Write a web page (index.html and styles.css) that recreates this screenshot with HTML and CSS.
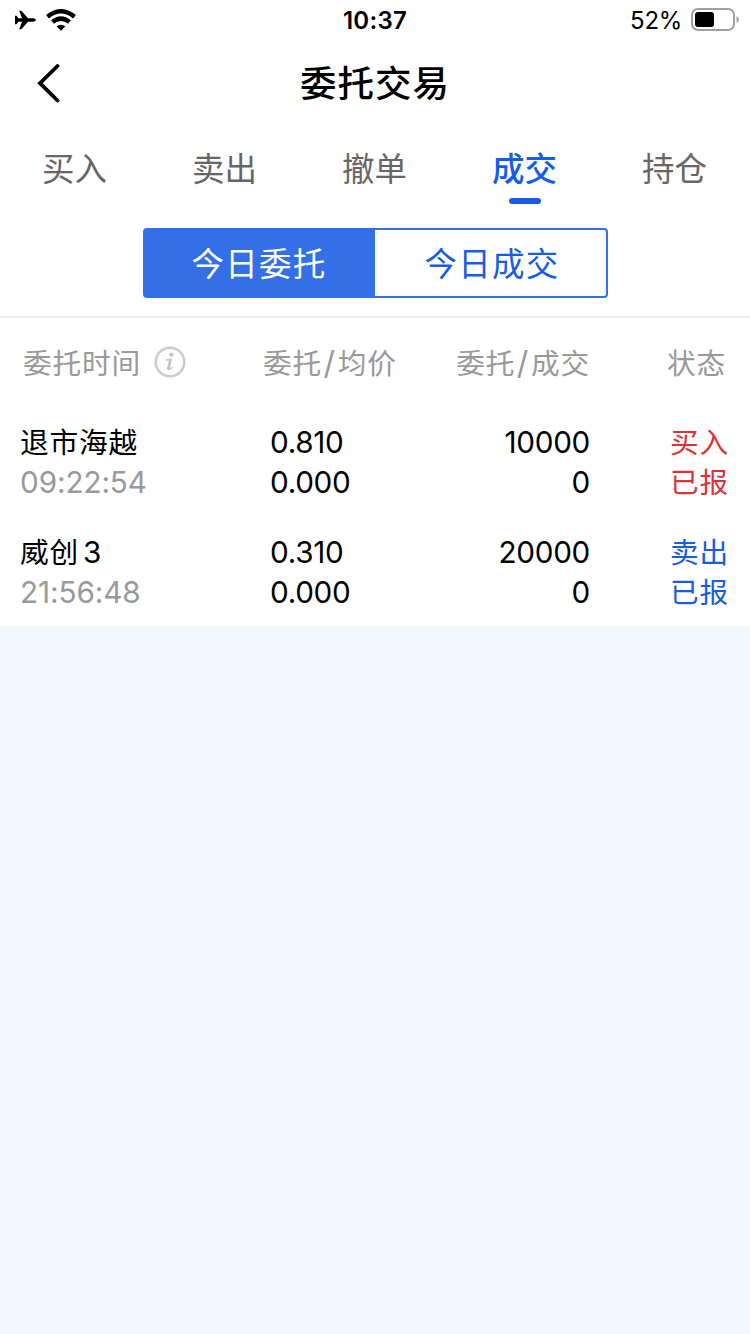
FILE: index.html
```html
<!DOCTYPE html>
<html lang="zh-CN">
<head>
<meta charset="utf-8">
<title>委托交易</title>
<link rel="stylesheet" href="styles.css">
</head>
<body>
<div class="top">
  <div class="status">
    <div class="status-left">
      <svg class="plane" viewBox="0 0 22 20" width="22" height="20"><path d="M21.800 10C21.800 8.900 20.500 8.300 18.500 8.300H14L7.500 .7H5.200L8 8.300H4.300L2.600 5.700H1V14.300H2.600L4.300 11.700H8L5.200 19.300H7.500L14 11.700H18.500C20.500 11.700 21.800 11.100 21.800 10Z"/></svg>
      <svg class="wifi" viewBox="0 0 30 22" width="30" height="22"><path d="M1.500 7.700Q15-3.100 28.500 7.700" fill="none" stroke="#000" stroke-width="4.500"/><path d="M6.500 13Q15 6.200 23.500 13" fill="none" stroke="#000" stroke-width="4.500"/><path d="M10.600 17.300Q15 14 19.400 17.300L15 21.700Z"/></svg>
    </div>
    <div class="clock">10:37</div>
    <div class="status-right">
      <span>52%</span>
      <svg viewBox="0 0 48 24" width="48" height="24"><rect x="1" y="1" width="42" height="21" rx="6" fill="none" stroke="#a0a0a0" stroke-width="2"/><rect x="4" y="4" width="19" height="15" rx="3"/><path d="M45.500 8.200Q48 9 48 11.500T45.500 14.800Z" fill="#a0a0a0"/></svg>
    </div>
  </div>
  <header class="nav">
    <svg class="back" viewBox="0 0 24 40" width="24" height="40"><path d="M21.500 3L4 20.200L21.500 37.500" fill="none" stroke="#000" stroke-width="3.800" stroke-linecap="round" stroke-linejoin="miter"/></svg>
    <h1 class="title">委托交易</h1>
  </header>
  <nav class="tabs">
    <span class="tab">买入</span>
    <span class="tab">卖出</span>
    <span class="tab">撤单</span>
    <span class="tab active">成交</span>
    <span class="tab">持仓</span>
  </nav>
  <div class="segment">
    <span class="option selected">今日委托</span>
    <span class="option">今日成交</span>
  </div>
</div>
<main class="orders">
  <div class="row head">
    <div class="name">委托时间<svg class="info" viewBox="0 0 32 32" width="32" height="32"><circle cx="16" cy="16" r="14.300" fill="none" stroke="#ccc" stroke-width="2.500"/><circle cx="17.300" cy="8.600" r="2.200" fill="#c4c4c4"/><path d="M12 14Q14.500 13.800 16.600 13.300L14.200 22.500Q14.200 25 18.500 21.300" fill="none" stroke="#c4c4c4" stroke-width="1.500"/><path d="M16.600 13.200L14.100 23.800" fill="none" stroke="#c4c4c4" stroke-width="2.800"/></svg></div>
    <div class="price">委托<i class="slash">/</i>均价</div>
    <div class="amount">委托<i class="slash">/</i>成交</div>
    <div class="state">状态</div>
  </div>
  <div class="row">
    <div class="name"><div>退市海越</div><div class="num time">09:22:54</div></div>
    <div class="price num"><div>0.810</div><div>0.000</div></div>
    <div class="amount num"><div>10000</div><div>0</div></div>
    <div class="state buy"><div>买入</div><div>已报</div></div>
  </div>
  <div class="row">
    <div class="name"><div>威创<span class="num suffix">3</span></div><div class="num time">21:56:48</div></div>
    <div class="price num"><div>0.310</div><div>0.000</div></div>
    <div class="amount num"><div>20000</div><div>0</div></div>
    <div class="state sell"><div>卖出</div><div>已报</div></div>
  </div>
</main>
</body>
</html>
```
FILE: styles.css
```css
* { box-sizing: border-box; }
body {
  margin: 0;
  min-height: 1334px;
  background: #f2f6ff;
  color: #000;
  font-family: "Noto Sans CJK SC", sans-serif;
}
.top {
  height: 318px;
  background: #fff;
  border-bottom: 2px solid #eee;
}
.status {
  display: grid;
  grid-template-columns: 1fr 100px 1fr;
  height: 40px;
  font: 24px/42px Inter, sans-serif;
}
.status-left { display: flex; align-items: flex-start; padding: 9px 0 0 14px; gap: 10px; }
.plane { margin-top: 1px; }
.clock { text-align: center; font-weight: 600; letter-spacing: .3px; }
.status-right { display: flex; justify-content: flex-end; padding-right: 11px; gap: 9px; }
.status-right span { letter-spacing: -.3px; }
.status-right svg { margin-top: 8px; }
.nav {
  display: grid;
  grid-template-columns: 100px 1fr 100px;
  height: 88px;
}
.back { margin: 23px 0 0 36px; }
.title {
  margin: 0;
  text-align: center;
  font-size: 36.5px;
  font-weight: 500;
  line-height: 84px;
  letter-spacing: 1px;
}
.tabs { display: grid; grid-template-columns: repeat(5, 1fr); height: 76px; }
.tab {
  display: flex;
  flex-direction: column;
  align-items: center;
  padding: 19px 1px 0 0;
  color: #666;
  font-size: 32.5px;
  line-height: 40px;
}
.active { color: #175ce6; font-weight: 500; }
.active::after {
  content: "";
  width: 32px;
  height: 6px;
  margin-top: 11px;
  border-radius: 3px;
  background: #175ce6;
}
.segment {
  display: grid;
  grid-template-columns: 230px 1fr;
  width: 465px;
  height: 70px;
  margin: 24px 0 0 143px;
  border: 2px solid #336fe6;
  border-radius: 4px;
}
.option {
  padding-left: 3px;
  text-align: center;
  color: #175ce6;
  font-size: 32.5px;
  line-height: 64px;
  letter-spacing: 1.2px;
}
.selected { padding: 0 2px 0 0; background: #336fe6; color: #fff; }
.orders { height: 308px; background: #fff; }
.row {
  display: grid;
  grid-template-columns: 270px 170px 150px 139px;
  height: 110px;
  font-size: 28.7px;
  line-height: 38px;
  letter-spacing: .8px;
}
.row > div > div { height: 40px; }
.head { height: 104px; padding-top: 25px; color: #999; }
.name { padding-left: 20px; }
.head .name { display: flex; padding-left: 23px; }
.info { margin: 3px 0 0 13px; }
.head .price { margin-left: -7px; }
.amount, .state { text-align: right; white-space: nowrap; }
.head .state { padding-right: 3px; }
.slash { font: normal 32px Inter, sans-serif; margin: 0 2px 0 1.5px; }
.num {
  font-family: Inter, sans-serif;
  font-size: 29.7px;
  line-height: 41px;
  letter-spacing: -.3px;
}
.time { color: #999; letter-spacing: -.1px; }
.suffix { margin-left: 4px; line-height: 36px; }
.buy { color: #e03138; }
.sell { color: #175ce6; }
```
